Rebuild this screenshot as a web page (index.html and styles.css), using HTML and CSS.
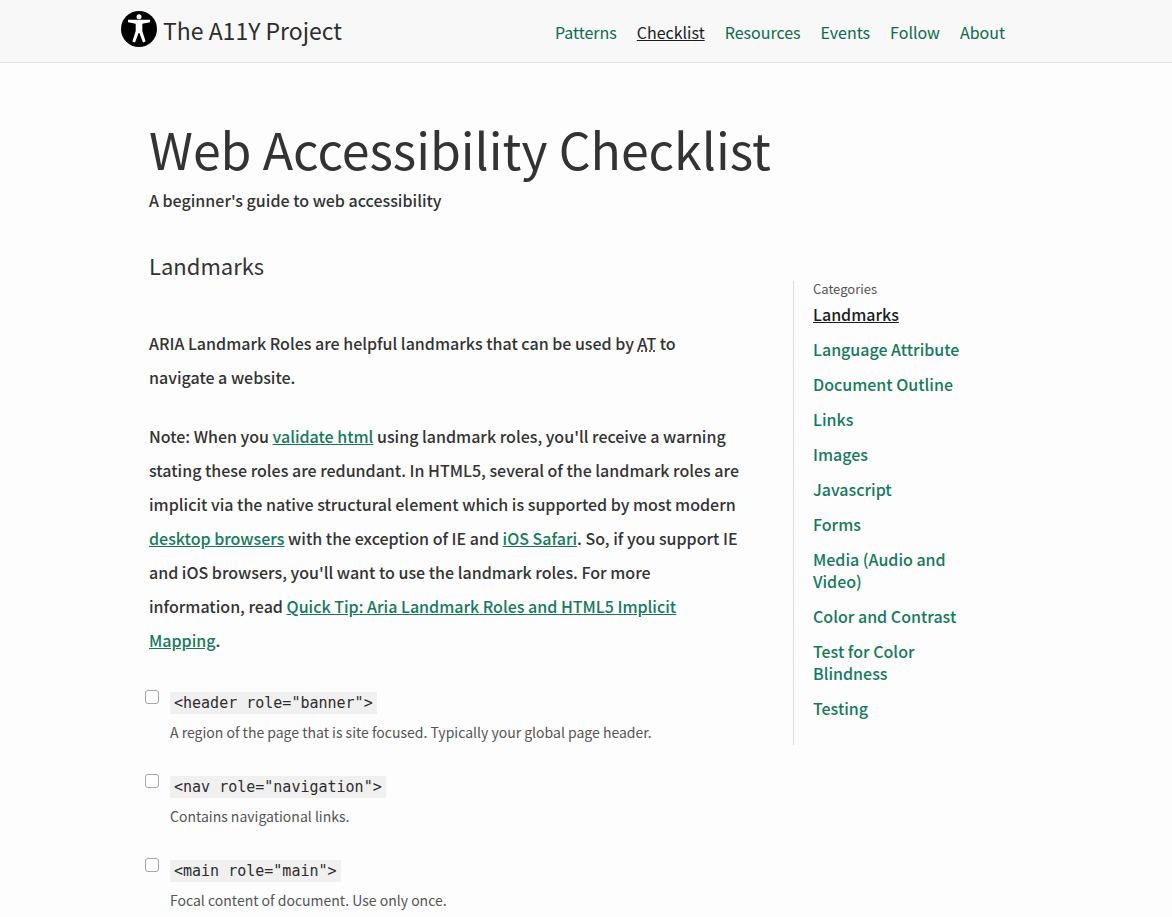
FILE: index.html
```html
<!DOCTYPE html>
<html lang="en">
<head>
<meta charset="utf-8">
<title>Web Accessibility Checklist - The A11Y Project</title>
<link rel="stylesheet" href="styles.css">
</head>
<body>
<header class="site-header">
  <div class="header-inner">
    <a class="brand" href="#">
      <svg class="logo" viewBox="0 0 36 36" aria-hidden="true"><circle cx="18" cy="18" r="18"/><g fill="#fff"><circle cx="18" cy="5.700" r="2.500"/><path d="M7 8.800h22v2.400l-7.700 1.500v7.300l3.300 10.600-2.600.9-3.600-9.500h-.8l-3.600 9.500-2.600-.9 3.300-10.600v-7.300l-7.700-1.500z"/></g></svg>
      <span>The A11Y Project</span>
    </a>
    <nav class="main-nav" aria-label="Main">
      <a href="#">Patterns</a>
      <a class="current" href="#">Checklist</a>
      <a href="#">Resources</a>
      <a href="#">Events</a>
      <a href="#">Follow</a>
      <a href="#">About</a>
    </nav>
  </div>
</header>
<div class="page">
  <main class="content">
    <h1>Web Accessibility Checklist</h1>
    <p class="subtitle">A beginner's guide to web accessibility</p>
    <h2 id="landmarks">Landmarks</h2>
    <p>ARIA Landmark Roles are helpful landmarks that can be used by <abbr title="Assistive Technology">AT</abbr> to navigate a website.</p>
    <p>Note: When you <a href="#">validate html</a> using landmark roles, you'll receive a warning stating these roles are redundant. In HTML5, several of the landmark roles are implicit via the native structural element which is supported by most modern <a href="#">desktop browsers</a> with the exception of IE and <a href="#">iOS Safari</a>. So, if you support IE and iOS browsers, you'll want to use the landmark roles. For more information, read <a href="#">Quick Tip: Aria Landmark Roles and HTML5 Implicit Mapping</a>.</p>
    <ul class="checklist">
      <li>
        <input type="checkbox" id="banner">
        <label for="banner"><code>&lt;header role="banner"&gt;</code><span>A region of the page that is site focused. Typically your global page header.</span></label>
      </li>
      <li>
        <input type="checkbox" id="navigation">
        <label for="navigation"><code>&lt;nav role="navigation"&gt;</code><span>Contains navigational links.</span></label>
      </li>
      <li>
        <input type="checkbox" id="main">
        <label for="main"><code>&lt;main role="main"&gt;</code><span>Focal content of document. Use only once.</span></label>
      </li>
    </ul>
  </main>
  <nav class="categories" aria-labelledby="cat-title">
    <h3 id="cat-title">Categories</h3>
    <a class="current" href="#landmarks">Landmarks</a>
    <a href="#">Language Attribute</a>
    <a href="#">Document Outline</a>
    <a href="#">Links</a>
    <a href="#">Images</a>
    <a href="#">Javascript</a>
    <a href="#">Forms</a>
    <a href="#">Media (Audio and Video)</a>
    <a href="#">Color and Contrast</a>
    <a href="#">Test for Color Blindness</a>
    <a href="#">Testing</a>
  </nav>
</div>
</body>
</html>
```
FILE: styles.css
```css
* { box-sizing: border-box; }

body {
  margin: 0;
  background: #fdfdfd;
  color: #333;
  font: 500 16px/34px "Noto Sans CJK JP", "Noto Sans CJK SC", sans-serif;
}

a { color: #157a5c; }

.site-header {
  background: #f8f8f8;
  border-bottom: 1px solid #e3e3e3;
}

.header-inner {
  display: flex;
  justify-content: space-between;
  align-items: center;
  max-width: 930px;
  min-height: 62px;
  margin: 0 auto;
  padding: 0 46px 0 0;
}

.brand {
  display: flex;
  align-items: center;
  gap: 6px;
  padding-bottom: 4px;
  color: #2d2d2d;
  font-size: 23px;
  font-weight: 400;
  text-decoration: none;
}

.brand span { padding-top: 2px; }

.logo {
  width: 36px;
  height: 36px;
}

.main-nav {
  display: flex;
  gap: 20px;
  padding-top: 1px;
  font-weight: 400;
}

.main-nav a { color: #0c6a4d; }

.main-nav a,
.categories a { text-decoration: none; }

.main-nav .current,
.categories .current {
  color: #1c1c1c;
  text-decoration: underline;
}

.page {
  display: flex;
  align-items: flex-start;
  gap: 50px;
  max-width: 874px;
  margin: 0 auto;
  padding-top: 52px;
}

.content {
  flex: 0 1 594px;
  min-width: 0;
}

h1, h2, h3 { margin: 0; font-weight: 400; }

h1 {
  margin-bottom: 2px;
  font-size: 50px;
  line-height: 66px;
  white-space: nowrap;
}

p { margin: 0 0 25px; }

.subtitle { margin: 0; }

h2 {
  margin: 31px 0 44px;
  font-size: 22px;
}

abbr {
  text-decoration: underline dotted;
}

.checklist {
  margin: 0;
  padding: 0;
  list-style: none;
}

.checklist li {
  display: flex;
  align-items: flex-start;
  gap: 11px;
  margin: 0 0 20px -4px;
}

.checklist input {
  width: 14px;
  height: 14px;
  margin: 8px 0 0;
  appearance: none;
  background: #fff;
  border: 1px solid #a6a6a6;
  border-radius: 3px;
}

.checklist label { padding-top: 2px; }

code {
  padding: 2px 4px;
  background: #f0f0f0;
  color: #2d2d2d;
  font: 400 15px/20px "DejaVu Sans Mono", monospace;
}

.checklist span {
  display: block;
  color: #555;
  font-size: 14px;
  font-weight: 400;
  line-height: 28px;
}

.categories {
  display: flex;
  flex-direction: column;
  gap: 13px;
  flex: 0 0 190px;
  margin-top: 166px;
  padding: 0 0 26px 19px;
  border-left: 1px solid #ddd;
  line-height: 22px;
}

.categories h3 {
  margin: -3px 0 -10px;
  color: #555;
  font-size: 13px;
}
```
